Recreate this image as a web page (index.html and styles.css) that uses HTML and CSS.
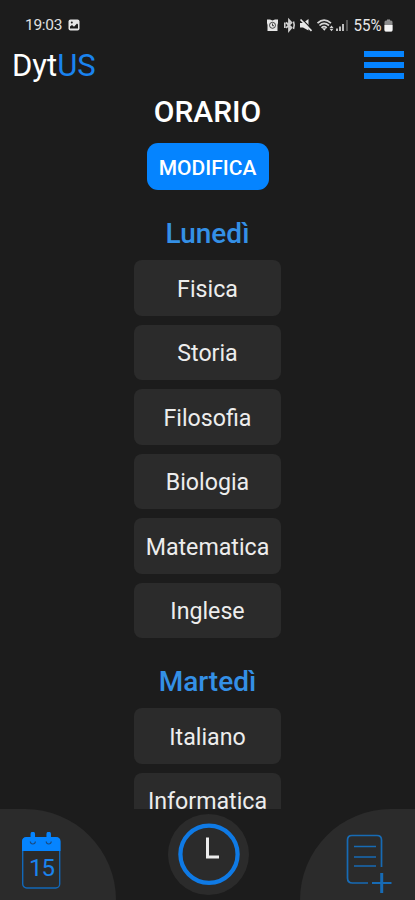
FILE: index.html
```html
<!DOCTYPE html>
<html lang="it">
<head>
  <meta charset="UTF-8">
  <meta name="viewport" content="width=device-width, initial-scale=1.0">
  <title>DytUS - Orario</title>
  <link rel="stylesheet" href="styles.css">
</head>
<body>
  <div class="app">

    <!-- Barra di stato -->
    <div class="status-bar">
      <div class="status-left">
        <span>19:03</span>
        <svg width="12" height="12" viewBox="0 0 12 12">
          <rect x="0.5" y="0.5" width="11" height="11" rx="2" fill="#e6e6e6"/>
          <path d="M2 9.5V7.5L4 6L6 7.8L9 4.5L10 5.5V9.5Z" fill="#1c1c1c"/>
          <circle cx="3.8" cy="3.6" r="1" fill="#1c1c1c"/>
        </svg>
      </div>
      <div class="status-right">
        <svg width="117" height="18" viewBox="0 0 117 18">
          <!-- sveglia -->
          <path d="M1 3.5H4L6.5 4.5L9 3.500H12V7L11.5 9V15H1.5V9L1 7Z" fill="#e6e6e6"/>
          <circle cx="6.5" cy="9.3" r="3" fill="none" stroke="#1c1c1c" stroke-width="0.8"/>
          <path d="M6.5 7.5V9.7H8" fill="none" stroke="#1c1c1c" stroke-width="0.8"/>
          <!-- bluetooth -->
          <path d="M20 6.500L25.5 11.500L23 14.500V4L25.5 6.800L20 11.800" fill="none" stroke="#cfcfcf" stroke-width="1.8"/>
          <path d="M18.8 6.500V12M27.500 5.500Q29 9.200 27.500 13" fill="none" stroke="#cfcfcf" stroke-width="1.6"/>
          <!-- muto -->
          <path d="M34 7H37L42.5 3V14.500L37 11.500H34Z" fill="#e6e6e6"/>
          <path d="M35.500 2.500L46 13.500" stroke="#1c1c1c" stroke-width="1.200"/>
          <path d="M34.500 3.500L45.500 14.800" stroke="#e6e6e6" stroke-width="1.700"/>
          <!-- wifi -->
          <path d="M51.500 7.200Q58 1.200 65 7.200M53.500 9.500Q58 5.200 63 9.500M55.500 11.800Q58 9.400 60.800 11.800" fill="none" stroke="#d6d6d6" stroke-width="1.700"/>
          <path d="M56.200 12.200H60.300L58.300 14.800Z" fill="#e6e6e6"/>
          <path d="M63.500 12L65.500 9.500L67.500 12ZM63.500 12.700L65.500 15.200L67.500 12.700Z" fill="#d6d6d6"/>
          <!-- segnale -->
          <path d="M71 12.500V15M74 10.500V15M77 8V15" stroke="#bdbdbd" stroke-width="2"/>
          <path d="M81 4V15" stroke="#555" stroke-width="2"/>
          <text x="87.5" y="15" class="battery-text" textLength="28" lengthAdjust="spacingAndGlyphs">55%</text>
        </svg>
        <svg width="9" height="13" viewBox="0 0 9 13">
          <path d="M3 0.500H6V2H3Z" fill="#999"/>
          <rect x="0.5" y="1.500" width="8" height="11" rx="1.500" fill="#8b8b8b"/>
          <path d="M0.5 6H8.500V11Q8.500 12.500 7 12.500H2Q0.500 12.500 0.500 11Z" fill="#f5f5f5"/>
        </svg>
      </div>
    </div>

    <!-- Header con logo e menu -->
    <header class="header">
      <div class="logo">Dyt<span>US</span></div>
      <div class="menu">
        <div></div>
        <div></div>
        <div></div>
      </div>
    </header>

    <!-- Elenco delle materie per giorno -->
    <main class="content">
      <h1>ORARIO</h1>
      <button class="edit-btn">MODIFICA</button>

      <h2>Lunedì</h2>
      <div class="subjects">
        <div class="subject">Fisica</div>
        <div class="subject">Storia</div>
        <div class="subject">Filosofia</div>
        <div class="subject">Biologia</div>
        <div class="subject">Matematica</div>
        <div class="subject">Inglese</div>
      </div>

      <h2>Martedì</h2>
      <div class="subjects">
        <div class="subject">Italiano</div>
        <div class="subject">Informatica</div>
      </div>
    </main>

    <!-- Navigazione in basso -->
    <nav class="bottom-nav">
      <div class="nav-left">
        <svg width="42" height="60" viewBox="0 0 42 60">
          <rect x="1.7" y="6" width="37" height="50" rx="4" fill="none" stroke="#1268b8" stroke-width="1.4"/>
          <path d="M1 19V9.500Q1 5 5.500 5H35Q39.500 5 39.500 9.500V19Z" fill="#0584ff"/>
          <path d="M11.800 2V8M27.700 2V8" stroke="#0584ff" stroke-width="4.500" stroke-linecap="round"/>
          <path d="M9.300 9.500Q9.500 12 11.800 12Q14.200 12 14.400 9.500M25.200 9.500Q25.400 12 27.700 12Q30 12 30.300 9.500" fill="none" stroke="#1c4a7d" stroke-width="1.200"/>
          <text x="8" y="43.500" class="day-text" textLength="26" lengthAdjust="spacing">15</text>
        </svg>
      </div>
      <div class="nav-center">
        <svg width="81" height="81" viewBox="0 0 81 81">
          <circle cx="41" cy="40.200" r="28.600" fill="none" stroke="#0f7ae5" stroke-width="4.300"/>
          <path d="M39.500 23.500V43H51" fill="none" stroke="#ededed" stroke-width="3"/>
        </svg>
      </div>
      <div class="nav-right">
        <svg width="46" height="60" viewBox="0 0 46 60">
          <g fill="none" stroke="#176bb5" stroke-width="1.700">
            <path d="M22 49H6.500Q1.500 49 1.500 44V6Q1.500 1.500 6 1.500H31Q35.500 1.500 35.500 6V33"/>
            <path d="M8 12.500H30M8 23H30M8 32H30"/>
          </g>
          <path d="M35.700 39V59" stroke="#176bb5" stroke-width="3"/>
          <path d="M26 49H45.500" stroke="#176bb5" stroke-width="2"/>
        </svg>
      </div>
    </nav>

  </div>
</body>
</html>
```

FILE: styles.css
```css
* {
  box-sizing: border-box;
}

body {
  margin: 0;
  background-color: #1c1c1c;
  font-family: Roboto, 'Liberation Sans', sans-serif;
  color: #ffffff;
}

.app {
  display: flex;
  flex-direction: column;
  height: 900px;
  overflow: hidden;
}

/* Barra di stato */
.status-bar {
  display: flex;
  justify-content: space-between;
  align-items: center;
  height: 50px;
  padding: 0 22px 0 25px;
  font-size: 15.5px;
  color: #e0e0e0;
}

.status-left,
.status-right {
  display: flex;
  align-items: center;
}

.status-left {
  gap: 6px;
}

.status-left span {
  letter-spacing: -0.3px;
}

.status-right {
  gap: 1px;
}

.status-bar svg {
  display: block;
}

.battery-text {
  font-size: 16px;
  fill: #e6e6e6;
}

/* Header */
.header {
  display: flex;
  justify-content: space-between;
  align-items: center;
  height: 30px;
  padding: 0 11px 0 12px;
}

.logo {
  padding-top: 2px;
  font-size: 31px;
  line-height: 30px;
}

.logo span {
  color: #1a83ee;
}

.menu {
  display: flex;
  flex-direction: column;
  gap: 5px;
  width: 40px;
  margin-bottom: 1px;
}

.menu div {
  height: 6px;
  background-color: #0584ff;
}

.content {
  display: flex;
  flex-direction: column;
  align-items: center;
  height: 729px;
  padding-top: 14px;
  overflow: hidden;
}

h1 {
  margin: 0;
  font-size: 30px;
  font-weight: 500;
  line-height: 36px;
}

.edit-btn {
  flex-shrink: 0;
  width: 122px;
  height: 47px;
  margin-top: 13px;
  padding: 2px 0 0;
  border: none;
  border-radius: 11px;
  background-color: #0584ff;
  color: #ffffff;
  font-family: inherit;
  font-size: 21px;
  font-weight: 500;
}

h2 {
  margin: 29px 0 0;
  font-size: 28px;
  font-weight: 500;
  line-height: 30px;
  color: #3490e6;
}

.subjects {
  display: flex;
  flex-direction: column;
  gap: 9px;
  margin-top: 11px;
}

.subject {
  display: flex;
  flex-shrink: 0;
  align-items: center;
  justify-content: center;
  width: 147px;
  height: 55.5px;
  padding-top: 2px;
  border-radius: 8px;
  background-color: #2b2b2b;
  color: #ededed;
  font-size: 23.2px;
}

/* Navigazione in basso */
.bottom-nav {
  display: flex;
  justify-content: space-between;
  height: 91px;
}

.nav-left,
.nav-right {
  background-color: #2b2b2b;
}

.nav-left {
  width: 116px;
  padding: 23px 0 0 21px;
  border-top-right-radius: 92px;
}

.nav-center {
  width: 81px;
  height: 81px;
  margin-top: 5px;
  border-radius: 50%;
  background-color: #2b2b2b;
}

.nav-right {
  width: 115px;
  padding: 25px 0 0 46px;
  border-top-left-radius: 92px;
}

.day-text {
  font-size: 24px;
  fill: #1a83ee;
}
```
